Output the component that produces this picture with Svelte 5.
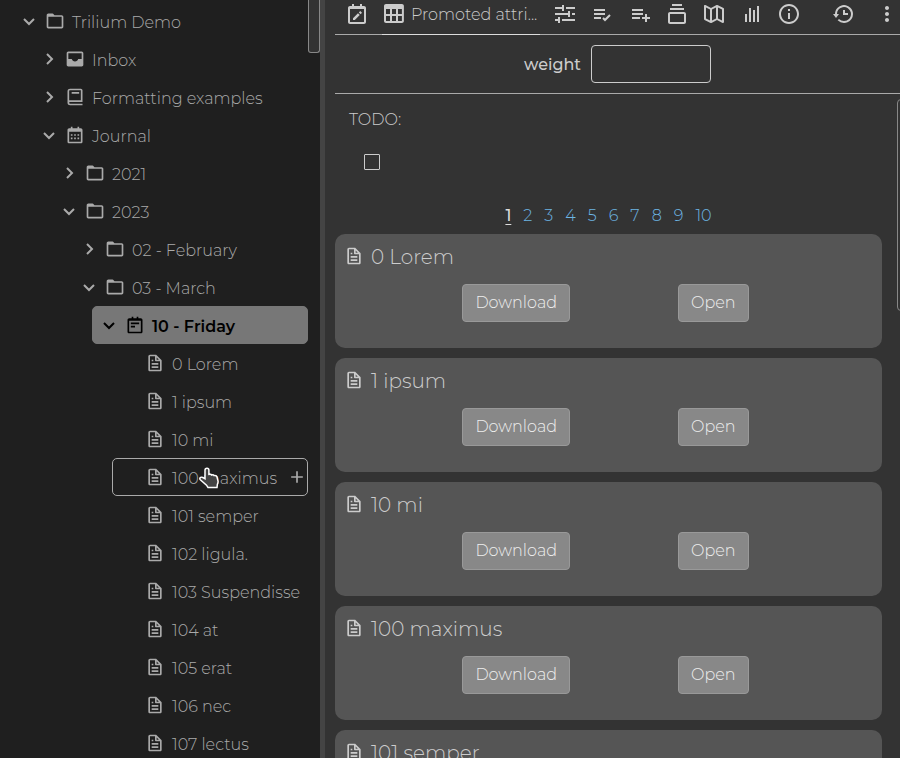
<script lang="ts">
	type TreeNote = {
		title: string;
		level: number;
		icon: string;
		expanded?: boolean;
		active?: boolean;
		hovered?: boolean;
	};

	const icons: Record<string, string> = {
		down: 'M16.293 9.293 12 13.586 7.707 9.293l-1.414 1.414L12 16.414l5.707-5.707z',
		right: 'M10.707 17.707 16.414 12l-5.707-5.707-1.414 1.414L13.586 12l-4.293 4.293z',
		plus: 'M19 11h-6V5h-2v6H5v2h6v6h2v-6h6z',
		folder:
			'M20 5h-8.586L9.707 3.293A.997.997 0 0 0 9 3H4c-1.103 0-2 .897-2 2v14c0 1.103.897 2 2 2h16c1.103 0 2-.897 2-2V7c0-1.103-.897-2-2-2zM4 19V7h16l.002 12H4z',
		inbox:
			'M20 3H4c-1.103 0-2 .897-2 2v14c0 1.103.897 2 2 2h16c1.103 0 2-.897 2-2V5c0-1.103-.897-2-2-2zm-1 9h-3.142c-.446 1.722-1.997 3-3.858 3s-3.412-1.278-3.858-3H4V5h16v7h-1z',
		book: 'M6 22h15v-2H6.012C5.55 19.988 5 19.805 5 19s.55-.988 1.012-1H21V4c0-1.103-.897-2-2-2H6c-1.206 0-3 .799-3 3v14c0 2.201 1.794 3 3 3zM5 8V5c0-.805.55-.988 1-1h13v12H5V8zM8 6h9v2H8z',
		calendar:
			'M7 11h2v2H7zm0 4h2v2H7zm4-4h2v2h-2zm0 4h2v2h-2zm4-4h2v2h-2zm0 4h2v2h-2zM5 22h14c1.103 0 2-.897 2-2V6c0-1.103-.897-2-2-2h-2V2h-2v2H9V2H7v2H5c-1.103 0-2 .897-2 2v14c0 1.103.897 2 2 2zM19 8l.001 12H5V8h14z',
		notepad:
			'M19 4h-3V2h-2v2h-4V2H8v2H5c-1.103 0-2 .897-2 2v14c0 1.103.897 2 2 2h14c1.103 0 2-.897 2-2V6c0-1.103-.897-2-2-2zM5 20V7h14l.002 13H5zM7 9h10v2H7zm0 4h5v2H7z',
		file: 'M19.903 8.586a.997.997 0 0 0-.196-.293l-6-6a.997.997 0 0 0-.293-.196c-.03-.014-.062-.022-.094-.033a.991.991 0 0 0-.259-.051C13.04 2.011 13.021 2 13 2H6c-1.103 0-2 .897-2 2v16c0 1.103.897 2 2 2h12c1.103 0 2-.897 2-2V9c0-.021-.011-.04-.013-.062a.952.952 0 0 0-.051-.259c-.01-.032-.019-.063-.033-.093zM16.586 8H14V5.414L16.586 8zM6 20V4h6v5a1 1 0 0 0 1 1h5l.002 10H6zM8 12h8v2H8zm0 4h8v2H8zm0-8h2v2H8z',
		calendarEdit:
			'M19 4h-2V2h-2v2H9V2H7v2H5c-1.103 0-2 .897-2 2v14c0 1.103.897 2 2 2h14c1.103 0 2-.897 2-2V6c0-1.103-.897-2-2-2zM5 20V7h14l.002 13H5zM15.628 12.183l-1.8-1.799 1.37-1.371 1.8 1.799zm-7.623 4.018V18h1.799l4.976-4.97-1.799-1.799z',
		table: 'M4 21h15.893c1.103 0 2-.897 2-2V4c0-1.103-.897-2-2-2H4c-1.103 0-2 .897-2 2v15c0 1.103.897 2 2 2zm0-2v-5h4v5H4zM14 7v5h-4V7h4zM8 7v5H4V7h4zm2 12v-5h4v5h-4zm6 0v-5h3.894v5H16zm3.893-7H16V7h3.893v5z',
		slider:
			'M13 5h9v2h-9zM2 7h7v2h2V3H9v2H2zm7 10h13v2H9zm10-6h3v2h-3zm-2 4V9.012h-2V11H2v2h13v2zM7 21v-6H5v2H2v2h3v2z',
		listCheck:
			'M4 7h11v2H4zm0 4h11v2H4zm0 4h7v2H4zm15.299-2.708-4.3 4.291-1.292-1.291-1.414 1.415 2.706 2.704 5.712-5.703z',
		listPlus: 'M19 15v-3h-2v3h-3v2h3v3h2v-3h3v-2h-.937zM4 7h11v2H4zm0 4h11v2H4zm0 4h8v2H4z',
		collection:
			'M19 10H5c-1.103 0-2 .897-2 2v8c0 1.103.897 2 2 2h14c1.103 0 2-.897 2-2v-8c0-1.103-.897-2-2-2zM5 20v-8h14l.002 8H5zM5 6h14v2H5zm2-4h10v2H7z',
		map: 'm21.447 6.105-6-3a1 1 0 0 0-.895 0L9 5.882 3.447 3.105A1 1 0 0 0 2 4v13c0 .379.214.725.553.895l6 3a1 1 0 0 0 .895 0L15 18.118l5.553 2.776a.992.992 0 0 0 .972-.043c.295-.183.475-.504.475-.851V7c0-.379-.214-.725-.553-.895zM10 7.618l4-2v10.764l-4 2V7.618zm-6-2 4 2v10.764l-4-2V5.618zm16 12.764-4-2V5.618l4 2v10.764z',
		chart: 'M9 6h2v14H9zm4 2h2v12h-2zm4-4h2v16h-2zM5 12h2v8H5z',
		info: 'M12 2C6.486 2 2 6.486 2 12s4.486 10 10 10 10-4.486 10-10S17.514 2 12 2zm0 18c-4.411 0-8-3.589-8-8s3.589-8 8-8 8 3.589 8 8-3.589 8-8 8zM11 11h2v6h-2zm0-4h2v2h-2z',
		history:
			'M12 8v5h5v-2h-3V8zM21.292 8.497a8.957 8.957 0 0 0-1.928-2.862 9.004 9.004 0 0 0-4.55-2.452 9.09 9.09 0 0 0-3.626 0 8.965 8.965 0 0 0-4.552 2.453 9.048 9.048 0 0 0-1.928 2.86A8.963 8.963 0 0 0 4 12l.001.025H2L5 16l3-3.975H6.001L6 12a6.957 6.957 0 0 1 1.195-3.913 7.066 7.066 0 0 1 1.891-1.892 7.034 7.034 0 0 1 2.503-1.054 7.003 7.003 0 0 1 8.269 5.445 7.117 7.117 0 0 1 0 2.824 6.936 6.936 0 0 1-1.054 2.503c-.25.371-.537.72-.854 1.036a7.058 7.058 0 0 1-2.225 1.501 6.98 6.98 0 0 1-1.313.408 7.117 7.117 0 0 1-2.823 0 6.957 6.957 0 0 1-2.501-1.053 7.066 7.066 0 0 1-1.037-.855l-1.414 1.414A8.985 8.985 0 0 0 13 21a9.05 9.05 0 0 0 3.503-.707 9.009 9.009 0 0 0 3.959-3.26A8.968 8.968 0 0 0 22 12a8.928 8.928 0 0 0-.708-3.503z',
		dots: 'M12 10c-1.1 0-2 .9-2 2s.9 2 2 2 2-.9 2-2-.9-2-2-2zm0-6c-1.1 0-2 .9-2 2s.9 2 2 2 2-.9 2-2-.9-2-2-2zm0 12c-1.1 0-2 .9-2 2s.9 2 2 2 2-.9 2-2-.9-2-2-2z'
	};

	const tree: TreeNote[] = [
		{ title: 'Trilium Demo', level: 0, icon: 'folder', expanded: true },
		{ title: 'Inbox', level: 1, icon: 'inbox', expanded: false },
		{ title: 'Formatting examples', level: 1, icon: 'book', expanded: false },
		{ title: 'Journal', level: 1, icon: 'calendar', expanded: true },
		{ title: '2021', level: 2, icon: 'folder', expanded: false },
		{ title: '2023', level: 2, icon: 'folder', expanded: true },
		{ title: '02 - February', level: 3, icon: 'folder', expanded: false },
		{ title: '03 - March', level: 3, icon: 'folder', expanded: true },
		{ title: '10 - Friday', level: 4, icon: 'notepad', expanded: true, active: true },
		{ title: '0 Lorem', level: 5, icon: 'file' },
		{ title: '1 ipsum', level: 5, icon: 'file' },
		{ title: '10 mi', level: 5, icon: 'file' },
		{ title: '100 maximus', level: 5, icon: 'file', hovered: true },
		{ title: '101 semper', level: 5, icon: 'file' },
		{ title: '102 ligula.', level: 5, icon: 'file' },
		{ title: '103 Suspendisse', level: 5, icon: 'file' },
		{ title: '104 at', level: 5, icon: 'file' },
		{ title: '105 erat', level: 5, icon: 'file' },
		{ title: '106 nec', level: 5, icon: 'file' },
		{ title: '107 lectus', level: 5, icon: 'file' }
	];

	const ribbonTabs = [
		{ label: 'Basic properties', icon: 'slider' },
		{ label: 'Owned attributes', icon: 'listCheck' },
		{ label: 'Inherited attributes', icon: 'listPlus' },
		{ label: 'Note paths', icon: 'collection' },
		{ label: 'Note map', icon: 'map' },
		{ label: 'Similar notes', icon: 'chart' },
		{ label: 'Note info', icon: 'info' }
	];

	const cards = ['0 Lorem', '1 ipsum', '10 mi', '100 maximus', '101 semper'];
	const pages = [1, 2, 3, 4, 5, 6, 7, 8, 9, 10];

	let currentPage = $state(1);
	let weight = $state('');
	let done = $state(false);
</script>

{#snippet icon(name: string)}
	<svg class="icon" viewBox="0 0 24 24" fill="currentColor" aria-hidden="true">
		<path fill-rule="evenodd" d={icons[name]} />
	</svg>
{/snippet}

<div class="app">
	<aside class="sidebar">
		<ul class="tree">
			{#each tree as note}
				<li
					class="node"
					class:active={note.active}
					class:hovered={note.hovered}
					style="--level: {note.level}"
				>
					{#if note.expanded === undefined}
						<span class="expander"></span>
					{:else}
						<button class="expander" aria-label="Toggle {note.title}" aria-expanded={note.expanded}>
							{@render icon(note.expanded ? 'down' : 'right')}
						</button>
					{/if}
					<a class="note-link" href="#note">
						{@render icon(note.icon)}
						<span>{note.title}</span>
					</a>
					{#if note.hovered}
						<button class="add" aria-label="Add child note">{@render icon('plus')}</button>
						<svg class="pointer" viewBox="0 0 20 22" aria-hidden="true">
							<path
								d="M8 1.200c1.200 0 1.900.8 1.900 2v4.200l1-.2c.8-.1 1.400.2 1.800.8.9-.4 1.900-.1 2.400.6 1.100-.3 2.400.2 2.900 1.400l1 4.100c.2 1.100-.1 2-.6 3.100L18 20.500H9L7.500 18.200 1.300 12.800C.4 11.900.8 10.500 2 10.200c.6-.2 1.200 0 1.800.3L6 11.700V3.200c0-1.200.8-2 2-2z"
							/>
						</svg>
					{/if}
				</li>
			{/each}
		</ul>
		<div class="tree-scroll"></div>
	</aside>
	<div class="gutter"></div>

	<main class="main">
		<header class="ribbon">
			<button class="tab first" aria-label="Edited notes">{@render icon('calendarEdit')}</button>
			<button class="tab current">
				{@render icon('table')}
				<span>Promoted attri...</span>
			</button>
			<div class="tabs">
				{#each ribbonTabs as tab}
					<button class="tab" aria-label={tab.label}>{@render icon(tab.icon)}</button>
				{/each}
			</div>
			<div class="actions">
				<button class="tab" aria-label="Note revisions">{@render icon('history')}</button>
				<button class="tab" aria-label="Note actions">{@render icon('dots')}</button>
			</div>
		</header>

		<div class="attributes">
			<label for="weight">weight</label>
			<input id="weight" type="text" bind:value={weight} />
		</div>

		<div class="scroll-area">
			<div class="content">
				<div class="note-text">
					<p id="todo">TODO:</p>
					<input type="checkbox" aria-labelledby="todo" bind:checked={done} />
				</div>

				<nav class="pager" aria-label="Pages">
					{#each pages as page}
						<a
							href="#page-{page}"
							class:selected={page === currentPage}
							onclick={() => (currentPage = page)}>{page}</a
						>
					{/each}
				</nav>

				<div class="cards">
					{#each cards as title}
						<article class="card">
							<h5>{@render icon('file')}<span>{title}</span></h5>
							<div class="card-buttons">
								<button>Download</button>
								<button>Open</button>
							</div>
						</article>
					{/each}
				</div>
			</div>
			<div class="content-scroll"><div class="thumb"></div></div>
		</div>
	</main>
</div>

<style>
	:global(body) {
		margin: 0;
		background: #333;
	}

	.app {
		display: flex;
		height: 100vh;
		overflow: hidden;
		font-family: Montserrat, Inter, sans-serif;
		font-size: 16px;
		font-weight: 300;
		color: #ccc;
	}

	.app * {
		box-sizing: border-box;
	}

	button,
	input {
		font: inherit;
		color: inherit;
	}

	button {
		padding: 0;
		border: none;
		background: none;
		cursor: pointer;
	}

	a {
		text-decoration: none;
	}

	.icon {
		display: block;
		flex: none;
		width: 24px;
		height: 24px;
	}

	/* Note tree */
	.sidebar {
		flex: none;
		display: flex;
		width: 35%;
		min-width: 320px;
		background: #1f1f1f;
		color: #aaa;
		overflow: hidden;
	}

	.tree {
		flex: 1;
		min-width: 0;
		margin: 0;
		padding: 2px 0 0;
		list-style: none;
	}

	.node {
		position: relative;
		display: flex;
		align-items: center;
		height: 38px;
		margin-left: calc(12px + var(--level) * 20px);
		padding: 0 0 1px 4px;
		border: 1px solid transparent;
		border-radius: 5px;
	}

	.node.active {
		border-color: #777;
		background: #777;
		color: #000;
		font-weight: 600;
	}

	.node.hovered {
		border-color: #aaa;
	}

	.expander {
		flex: none;
		width: 24px;
		height: 24px;
		margin-right: 4px;
	}

	.note-link {
		flex: 1;
		display: flex;
		align-items: center;
		gap: 7px;
		color: inherit;
		white-space: nowrap;
	}

	.note-link .icon,
	.add .icon {
		width: 20px;
		height: 20px;
	}

	.note-link span {
		padding-top: 3px;
	}

	.pointer {
		position: absolute;
		top: 8px;
		left: 86px;
		width: 20px;
		height: 22px;
		fill: #444;
		stroke: #fff;
		stroke-width: 1.5;
	}

	.tree-scroll {
		flex: none;
		width: 12px;
		height: 53px;
		border: 1px solid #888;
		border-top: none;
		border-radius: 0 0 3px 3px;
		background: #333;
	}

	.gutter {
		flex: none;
		width: 5px;
		background: #444;
	}

	/* Ribbon */
	.main {
		flex: 1;
		display: flex;
		flex-direction: column;
		min-width: 0;
		padding-left: 10px;
	}

	.ribbon {
		flex: none;
		display: flex;
		height: 35px;
		padding: 0 1px 0 10px;
		border-bottom: 1px solid #aaa;
	}

	.tab {
		display: flex;
		align-items: flex-start;
		padding-top: 2px;
	}

	.tab.first {
		margin-right: 13px;
	}

	.tab.current {
		gap: 5px;
		height: 35px;
		width: 158px;
		margin-right: 13px;
		border-bottom: 1px solid #ddd;
		white-space: nowrap;
	}

	.tab.current span {
		line-height: 26px;
	}

	.tabs {
		flex: 1;
		display: flex;
		justify-content: space-between;
		margin-right: 30px;
	}

	.actions {
		display: flex;
		gap: 20px;
	}

	.attributes {
		flex: none;
		display: flex;
		align-items: center;
		justify-content: center;
		gap: 10px;
		padding: 10px 0;
		border-bottom: 1px solid #aaa;
		font-weight: 500;
	}

	.attributes input {
		width: 120px;
		height: 38px;
		padding: 6px 12px;
		border: 1px solid #ccc;
		border-radius: 4px;
		background: transparent;
	}

	/* Note content */
	.scroll-area {
		flex: 1;
		display: flex;
		gap: 15px;
		min-height: 0;
		overflow: hidden;
	}

	.content {
		flex: 1;
		min-width: 0;
	}

	.note-text {
		padding: 14px 14px 0;
	}

	.note-text p {
		margin: 0;
		line-height: 24px;
	}

	.note-text input {
		appearance: none;
		display: block;
		width: 16px;
		height: 16px;
		margin: 22px 0 0 15px;
		border: 1px solid #ccc;
		border-radius: 1px;
	}

	.note-text input:checked {
		background: #ccc;
	}

	.pager {
		display: flex;
		justify-content: center;
		gap: 12px;
		margin-top: 34px;
		line-height: 24px;
	}

	.pager a {
		color: #6db5e3;
	}

	.pager a.selected {
		color: #ddd;
		font-weight: 500;
		text-decoration: underline;
		text-underline-offset: 3px;
	}

	.cards {
		display: flex;
		flex-direction: column;
		gap: 10px;
		margin-top: 6px;
	}

	.card {
		height: 114px;
		padding: 10px 6px 0 0;
		border-radius: 10px;
		background: #555;
	}

	.card h5 {
		display: flex;
		gap: 7px;
		margin: 0 0 14px;
		padding-left: 9px;
		font-size: 20px;
		font-weight: 300;
		line-height: 26px;
	}

	.card h5 .icon {
		width: 20px;
		height: 20px;
		margin-top: 2px;
	}

	.card-buttons {
		display: flex;
		justify-content: center;
		gap: 108px;
	}

	.card-buttons button {
		height: 38px;
		padding: 0 12px 2px;
		border: 1px solid #999;
		border-radius: 4px;
		background: #888;
		color: #eee;
	}

	.content-scroll {
		width: 3px;
		padding-top: 5px;
		overflow: hidden;
	}

	.thumb {
		width: 12px;
		height: 212px;
		border: 1px solid #888;
		border-radius: 4px;
	}
</style>
